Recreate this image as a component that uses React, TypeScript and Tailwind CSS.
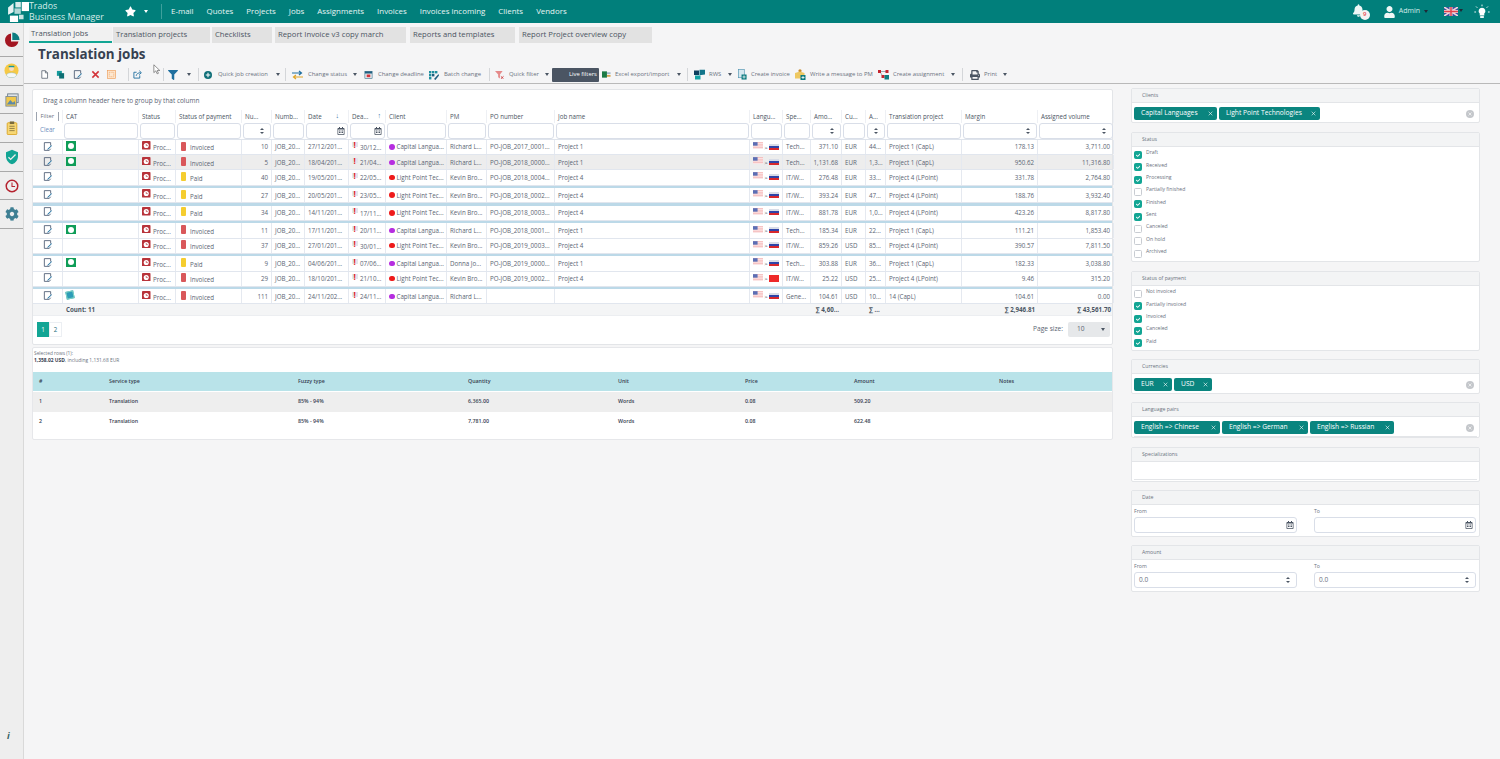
import React from "react";
import { FaBell, FaCheck, FaCog, FaFilter, FaPrint, FaRegCalendarAlt, FaStar, FaUser } from "react-icons/fa";
import { MdVerifiedUser } from "react-icons/md";

const cols =
  "grid grid-cols-[30px_76px_37px_66px_30px_33px_44px_37px_61px_40px_68px_195px_33px_28px_31px_24px_20px_76px_76px_76px]";

function Caret({ className = "", color = "border-t-[#4b5563]" }: { className?: string; color?: string }) {
  return <div className={"w-0 h-0 shrink-0 border-x-[2.5px] border-t-[3px] border-x-transparent " + color + " " + className} />;
}

function Sep({ className }: { className: string }) {
  return <div className={"w-px h-[13px] shrink-0 bg-[#d4d6d9] " + className} />;
}

function Label({ className, children }: { className: string; children: React.ReactNode }) {
  return <span className={"shrink-0 whitespace-nowrap text-[5.9px] text-[#6b7280] " + className}>{children}</span>;
}

function Logo() {
  return (
    <svg viewBox="0 0 24 22" className="w-[22px] h-[20px] ml-[8px] shrink-0" fill="#fff">
      <rect x="8" y="0" width="6" height="6" opacity=".85" />
      <rect x="15" y="0" width="8" height="10" />
      <polygon points="0,6 6,1 6,11 0,14" opacity=".9" />
      <polygon points="7,7 14,7 14,13 7,13" opacity=".7" />
      <polygon points="2,15 11,15 11,22 2,22" />
      <rect x="12" y="14" width="5" height="5" opacity=".8" />
    </svg>
  );
}

function Sidebar() {
  const box = "h-[28.7px] flex items-center justify-center border-b border-[#a9a9a9]";
  return (
    <aside className="w-[24px] shrink-0 bg-[#eeeeee] border-r border-[#d9d9d9] flex flex-col">
      <div className="h-[34px] flex items-center justify-center border-b border-[#a9a9a9]">
        <svg viewBox="0 0 16 16" className="w-[16px] h-[16px]">
          <path d="M7 1.5 A6.8 6.8 0 1 0 14.5 9.5 L7 9.5 Z" fill="#a31621" />
          <path d="M8.3 0.6 A7.4 7.4 0 0 1 15.6 8 L8.3 8 Z" fill="#0d7c80" />
        </svg>
      </div>
      <div className={box}>
        <svg viewBox="0 0 16 16" className="w-[15px] h-[15px]">
          <circle cx="8" cy="8" r="7.5" fill="#f6c945" />
          <circle cx="8" cy="6" r="2.6" fill="#f8dcc0" />
          <path d="M5 4.5 H11 V3 H5 Z" fill="#159a9c" />
          <path d="M2.5 13 C3 9.5 13 9.5 13.5 13 L11 15.5 H5 Z" fill="#f4f7f7" stroke="#8fbcc0" strokeWidth=".5" />
        </svg>
      </div>
      <div className={box}>
        <svg viewBox="0 0 16 16" className="w-[14px] h-[14px]">
          <rect x="3" y="1" width="12" height="10" fill="#dfe4e8" stroke="#6b7c88" />
          <rect x="1" y="4" width="12" height="11" fill="#f1c84b" stroke="#7c8b95" />
          <path d="M2 13 L6 8 L9 11 L11 9 L12 13 Z" fill="#5d8aa8" />
        </svg>
      </div>
      <div className={box}>
        <svg viewBox="0 0 16 16" className="w-[14px] h-[14px]">
          <rect x="2.5" y="2" width="11" height="13.5" rx="1" fill="#f7d774" stroke="#d9a21f" />
          <rect x="5.5" y="0.5" width="5" height="3" fill="#7a6a3a" />
          <path d="M5 6H11M5 8.5H11M5 11H11" stroke="#7a6a3a" strokeWidth=".9" />
        </svg>
      </div>
      <div className={box}>
        <MdVerifiedUser className="w-[16px] h-[16px] text-[#12a594]" />
      </div>
      <div className={box}>
        <svg viewBox="0 0 16 16" className="w-[14px] h-[14px]" fill="none" stroke="#b5232f">
          <circle cx="8" cy="8" r="6.6" strokeWidth="1.7" />
          <path d="M8 4V8.5H11.5" strokeWidth="1.2" />
        </svg>
      </div>
      <div className={box}>
        <FaCog className="w-[14px] h-[14px] text-[#3e7f93]" />
      </div>
      <div className="flex-1" />
      <div className="h-[30px] pl-[7px] text-[9px] text-[#33605f] font-bold italic">i</div>
    </aside>
  );
}

function DocIcon({ className = "" }: { className?: string }) {
  return (
    <svg viewBox="0 0 10 10" className={"w-[9px] h-[9px] shrink-0 " + className} fill="none" stroke="#4b5563" strokeWidth=".8">
      <path d="M2 .8H6L8.4 3.2V9.2H2Z" fill="#fff" />
      <path d="M6 .8V3.2H8.4" />
    </svg>
  );
}

function EditDoc({ className = "" }: { className?: string }) {
  return (
    <svg viewBox="0 0 10 10" className={"w-[9px] h-[9px] shrink-0 " + className} fill="none">
      <path d="M1.5 .7H8.5V4M8.5 7.5L7 9.3H1.5V.7" stroke="#42526a" strokeWidth=".9" />
      <path d="M9.4 3.6L5.2 7.6L4.6 8.6L5.8 8.2L10 4.2Z" fill="#1f6f9f" />
    </svg>
  );
}

function Toolbar() {
  return (
    <div className="h-[18px] shrink-0 flex items-center pl-[16px] border-b border-[#b9b9b9] relative">
      <DocIcon />
      <svg viewBox="0 0 10 10" className="w-[9px] h-[9px] shrink-0 ml-[7px]">
        <rect x="1" y="1" width="5.5" height="5.5" fill="#159a9c" />
        <rect x="3.5" y="3.5" width="5.5" height="6" fill="#0d6f73" />
      </svg>
      <EditDoc className="ml-[8px]" />
      <svg viewBox="0 0 10 10" className="w-[9px] h-[9px] shrink-0 ml-[9px]" stroke="#d3333a" strokeWidth="1.7">
        <path d="M1.5 1.5L8.5 8.5M8.5 1.5L1.5 8.5" />
      </svg>
      <svg viewBox="0 0 10 10" className="w-[9px] h-[9px] shrink-0 ml-[7px]" fill="#fde7d0" stroke="#ee9a55" strokeWidth=".7">
        <rect x=".5" y=".5" width="9" height="9" />
        <rect x="2.5" y="2.5" width="5" height="5" strokeDasharray="1 .7" />
      </svg>
      <Sep className="ml-[12px]" />
      <svg viewBox="0 0 10 10" className="w-[9px] h-[9px] shrink-0 ml-[4px]" fill="none" stroke="#1f6f9f" strokeWidth="1">
        <path d="M7.5 6V9H1V2.5H4" />
        <path d="M3.5 6.5C4 4 6 3 8.5 3M7 .8L9.3 3L7 5.2" />
      </svg>
      <Sep className="ml-[21px]" />
      <FaFilter className="w-[10px] h-[10px] shrink-0 ml-[4px] text-[#1f6f9f]" />
      <Caret className="ml-[9px]" />
      <Sep className="ml-[7px]" />
      <svg viewBox="0 0 10 10" className="w-[8px] h-[8px] shrink-0 ml-[5px]">
        <circle cx="5" cy="5" r="5" fill="#0f6f78" />
        <path d="M5 2.2V7.8M2.2 5H7.8" stroke="#fff" strokeWidth="1.3" />
      </svg>
      <Label className="w-[51px] ml-[6px]">Quick job creation</Label>
      <Caret className="ml-[7px]" />
      <Sep className="ml-[5px]" />
      <svg viewBox="0 0 11 10" className="w-[11px] h-[10px] shrink-0 ml-[6px]" fill="none" strokeWidth="1.2">
        <path d="M0 3H9M7 1L9.5 3L7 5" stroke="#1f6f9f" />
        <path d="M11 7H2M4 5L1.5 7L4 9" stroke="#e0a526" />
      </svg>
      <Label className="w-[39px] ml-[5px]">Change status</Label>
      <Caret className="ml-[6px]" />
      <svg viewBox="0 0 10 10" className="w-[9px] h-[9px] shrink-0 ml-[7px]">
        <rect x="1" y="1.5" width="8" height="8" fill="#e7ecef" stroke="#1f5f7f" strokeWidth=".6" />
        <rect x="1" y="1.5" width="8" height="2.4" fill="#1f5f7f" />
        <rect x="3" y="5" width="4" height="3" fill="#d3333a" />
      </svg>
      <Label className="w-[47px] ml-[5px]">Change deadline</Label>
      <svg viewBox="0 0 10 10" className="w-[10px] h-[10px] shrink-0 ml-[4px]" fill="#1f8f9f">
        <rect x="0" y="1" width="2.4" height="2.4" />
        <rect x="3" y="1" width="2.4" height="2.4" />
        <rect x="6" y="1" width="2.4" height="2.4" />
        <rect x="0" y="4" width="2.4" height="2.4" />
        <rect x="3" y="4" width="2.4" height="2.4" fill="#1f5f7f" />
        <rect x="0" y="7" width="2.4" height="2.4" />
        <path d="M9.5 4L5 9L6.5 10L10 5.5Z" fill="#1f5f7f" />
      </svg>
      <Label className="w-[38px] ml-[5px]">Batch change</Label>
      <Sep className="ml-[7px]" />
      <svg viewBox="0 0 10 10" className="w-[9px] h-[9px] shrink-0 ml-[5px]">
        <path d="M0 1H8.5L5.5 5V9.5L3.5 8V5Z" fill="#e58a8a" />
        <path d="M6.5 7L9.5 9.8M9.5 7L6.5 9.8" stroke="#cf3c3c" />
      </svg>
      <Label className="w-[31px] ml-[5px]">Quick filter</Label>
      <Caret className="ml-[5px]" />
      <div className="w-[47px] h-[14px] shrink-0 ml-[3px] bg-[#4b5563] rounded-[1px] flex items-center pl-[17px] text-[5.9px] text-white whitespace-nowrap">
        Live filters
      </div>
      <svg viewBox="0 0 10 10" className="w-[9px] h-[9px] shrink-0 ml-[3px]">
        <rect x="0" y="1.5" width="5.5" height="7" fill="#1c7a45" />
        <rect x="5.5" y="2.5" width="4" height="2" fill="#9fb7c9" />
        <rect x="5.5" y="5.5" width="4" height="2" fill="#d5a34c" />
      </svg>
      <Label className="w-[55px] ml-[4px]">Excel export/import</Label>
      <Caret className="ml-[7px]" />
      <Sep className="ml-[6px]" />
      <svg viewBox="0 0 11 11" className="w-[11px] h-[11px] shrink-0 ml-[6px]">
        <path d="M0 1.5H5V6H0Z" fill="#0f3f5f" />
        <path d="M5.5 .8H11V5.5L5.5 6.2Z" fill="#12758a" />
        <path d="M1 6.5H6.5V10.5H1Z" fill="#14a3a6" />
      </svg>
      <Label className="w-[13px] ml-[4px]">RWS</Label>
      <Caret className="ml-[6px]" />
      <svg viewBox="0 0 10 12" className="w-[10px] h-[11px] shrink-0 ml-[5px]">
        <rect x="1" y="0.5" width="6.5" height="9" fill="#d6e8f0" stroke="#4f93b0" strokeWidth=".7" />
        <rect x="4.5" y="6" width="5.5" height="5.5" fill="#0f7c80" />
        <path d="M7.2 7V10.5M5.5 8.7H9" stroke="#fff" strokeWidth=".8" />
      </svg>
      <Label className="w-[40px] ml-[4px]">Create invoice</Label>
      <svg viewBox="0 0 11 11" className="w-[11px] h-[11px] shrink-0 ml-[4px]">
        <circle cx="5" cy="1.8" r="1.6" fill="#c98a2b" />
        <path d="M0 4L5 2.5L9.5 4V9.5H0Z" fill="#eec861" />
        <rect x="5.5" y="6" width="5" height="5" fill="#0f7c80" />
        <path d="M8 7V10M6.5 8.5H9.5" stroke="#fff" strokeWidth=".8" />
      </svg>
      <Label className="w-[65px] ml-[4px]">Write a message to PM</Label>
      <svg viewBox="0 0 11 11" className="w-[11px] h-[11px] shrink-0 ml-[3px]">
        <path d="M2 2.5H8.5M2 2.5L5 8" stroke="#7a8a95" strokeWidth=".7" />
        <rect x="0" y="1" width="3" height="3" fill="#c4242e" />
        <rect x="7.5" y="1" width="3" height="3" fill="#c4242e" />
        <rect x="3.5" y="6" width="3" height="3" fill="#c4242e" />
        <rect x="6.5" y="6" width="4.5" height="4.5" fill="#0f7c80" />
      </svg>
      <Label className="w-[52px] ml-[4px]">Create assignment</Label>
      <Caret className="ml-[6px]" />
      <Sep className="ml-[7px]" />
      <FaPrint className="w-[10px] h-[10px] shrink-0 ml-[7px] text-[#4b5563]" />
      <Label className="w-[13px] ml-[4px]">Print</Label>
      <Caret className="ml-[6px]" />
      <svg viewBox="0 0 10 14" className="absolute left-[129px] top-[-2px] w-[8px] h-[11px]" fill="#fff" stroke="#555" strokeWidth=".8">
        <path d="M1 1V11L3.5 8.7L5.2 12.5L6.8 11.8L5.2 8.2H8.5Z" />
      </svg>
    </div>
  );
}

function Spinner() {
  return (
    <div className="flex flex-col gap-[1.5px] items-center absolute right-[6px] top-[4px]">
      <div className="w-0 h-0 border-x-[2.2px] border-b-[2.6px] border-x-transparent border-b-[#4b5563]" />
      <div className="w-0 h-0 border-x-[2.2px] border-t-[2.6px] border-x-transparent border-t-[#4b5563]" />
    </div>
  );
}

function FilterBox({ kind }: { kind?: "spin" | "date" }) {
  return (
    <div className="h-[16px] mx-[1px] relative bg-white border border-[#d9dee8] rounded-[3px]">
      {kind === "spin" && <Spinner />}
      {kind === "date" && <FaRegCalendarAlt className="absolute right-[2px] top-[3px] w-[8px] h-[8px] text-[#4b5563]" />}
    </div>
  );
}

function UsFlag() {
  return (
    <svg viewBox="0 0 12 8" className="w-[10px] h-[7px] shrink-0 -mt-[3px]">
      <rect width="12" height="8" fill="#f5b5b5" />
      <path d="M0 1.5H12M0 3.5H12M0 5.5H12M0 7.5H12" stroke="#fff" strokeWidth=".8" />
      <rect width="5.5" height="4.2" fill="#5b6fb5" />
    </svg>
  );
}

function ToFlag({ cn }: { cn?: boolean }) {
  if (cn) return <div className="w-[10px] h-[7px] shrink-0 -mt-[1px] bg-[#ee2a2a]" />;
  return (
    <div className="w-[10px] h-[6px] shrink-0 flex flex-col -mt-[1px]">
      <div className="flex-1 bg-[#d9dde8]" />
      <div className="flex-1 bg-[#2f45a8]" />
      <div className="flex-1 bg-[#d8282c]" />
    </div>
  );
}

type Row = {
  cat?: "green" | "blue";
  pay: "Invoiced" | "Paid";
  num: string;
  date: string;
  dead: string;
  lp?: boolean;
  pm: string;
  po: string;
  job: string;
  cn?: boolean;
  spec: string;
  amt: string;
  cur: string;
  a: string;
  proj: string;
  margin: string;
  vol: string;
  sel?: boolean;
  sep?: boolean;
};

const rows: Row[] = [
  { cat: "green", pay: "Invoiced", num: "10", date: "27/12/201...", dead: "30/12...", pm: "Richard L...", po: "PO-JOB_2017_0001...", job: "Project 1", spec: "Tech...", amt: "371.10", cur: "EUR", a: "44...", proj: "Project 1 (CapL)", margin: "178.13", vol: "3,711.00" },
  { cat: "green", pay: "Invoiced", num: "5", date: "18/04/201...", dead: "21/04...", pm: "Richard L...", po: "PO-JOB_2018_0000...", job: "Project 1", spec: "Tech...", amt: "1,131.68", cur: "EUR", a: "1,3...", proj: "Project 1 (CapL)", margin: "950.62", vol: "11,316.80", sel: true },
  { pay: "Paid", num: "40", date: "19/05/201...", dead: "22/05...", lp: true, pm: "Kevin Bro...", po: "PO-JOB_2018_0004...", job: "Project 4", spec: "IT/W...", amt: "276.48", cur: "EUR", a: "33...", proj: "Project 4 (LPoint)", margin: "331.78", vol: "2,764.80", sep: true },
  { pay: "Paid", num: "27", date: "20/05/201...", dead: "23/05...", lp: true, pm: "Kevin Bro...", po: "PO-JOB_2018_0002...", job: "Project 4", spec: "IT/W...", amt: "393.24", cur: "EUR", a: "47...", proj: "Project 4 (LPoint)", margin: "188.76", vol: "3,932.40", sep: true },
  { pay: "Paid", num: "34", date: "14/11/201...", dead: "17/11...", lp: true, pm: "Kevin Bro...", po: "PO-JOB_2018_0003...", job: "Project 4", spec: "IT/W...", amt: "881.78", cur: "EUR", a: "1,0...", proj: "Project 4 (LPoint)", margin: "423.26", vol: "8,817.80", sep: true },
  { cat: "green", pay: "Invoiced", num: "11", date: "17/11/201...", dead: "20/11...", pm: "Richard L...", po: "PO-JOB_2018_0001...", job: "Project 1", spec: "Tech...", amt: "185.34", cur: "EUR", a: "22...", proj: "Project 1 (CapL)", margin: "111.21", vol: "1,853.40" },
  { pay: "Invoiced", num: "37", date: "27/01/201...", dead: "30/01...", lp: true, pm: "Kevin Bro...", po: "PO-JOB_2019_0003...", job: "Project 4", spec: "IT/W...", amt: "859.26", cur: "USD", a: "85...", proj: "Project 4 (LPoint)", margin: "390.57", vol: "7,811.50", sep: true },
  { cat: "green", pay: "Paid", num: "9", date: "04/06/201...", dead: "07/06...", pm: "Donna Jo...", po: "PO-JOB_2019_0000...", job: "Project 1", spec: "Tech...", amt: "303.88", cur: "EUR", a: "36...", proj: "Project 1 (CapL)", margin: "182.33", vol: "3,038.80" },
  { pay: "Invoiced", num: "29", date: "18/10/201...", dead: "21/10...", lp: true, pm: "Kevin Bro...", po: "PO-JOB_2019_0002...", job: "Project 4", cn: true, spec: "IT/W...", amt: "25.22", cur: "USD", a: "25...", proj: "Project 4 (LPoint)", margin: "9.46", vol: "315.20", sep: true },
  { cat: "blue", pay: "Invoiced", num: "111", date: "24/11/202...", dead: "24/11...", pm: "Richard L...", po: "", job: "", spec: "Gene...", amt: "104.61", cur: "USD", a: "10...", proj: "14 (CapL)", margin: "104.61", vol: "0.00" },
];

function Cell({ right, className = "", children }: { right?: boolean; className?: string; children?: React.ReactNode }) {
  return (
    <div className={"flex items-center h-full min-w-0 px-[3px] border-r border-[#e5e9f0] whitespace-nowrap overflow-hidden " + (right ? "justify-end " : "") + className}>
      {children}
    </div>
  );
}

function GridRow({ r }: { r: Row }) {
  return (
    <>
      <div className={cols + " h-[15.2px] border-b border-[#e1e6ee] text-[#5a6472] " + (r.sel ? "bg-[#ededed]" : "bg-white")}>
        <Cell className="justify-center">
          <EditDoc className="-mt-[2px]" />
        </Cell>
        <Cell>
          {r.cat === "green" && (
            <div className="w-[10px] h-[9.5px] -mt-[2px] bg-[#0f9d58] flex items-center justify-center">
              <div className="w-[6px] h-[6px] bg-white rounded-full" />
            </div>
          )}
          {r.cat === "blue" && <div className="w-[8px] h-[8px] -mt-[2px] bg-[#2d9cb8] border border-[#7fd3c3] -rotate-12" />}
        </Cell>
        <Cell>
          <svg viewBox="0 0 10 10" className="w-[8.5px] h-[8.5px] shrink-0 -mt-[3px]" fill="none">
            <rect width="10" height="10" rx="1" fill="#b8333a" />
            <circle cx="5" cy="5.3" r="3" fill="#fff" />
            <path d="M5 3.6V5.4H6.8" stroke="#b8333a" strokeWidth=".8" />
          </svg>
          <span className="ml-[2.5px] mt-[2px]">Proc...</span>
        </Cell>
        <Cell>
          <div className={"w-[5px] h-[9px] shrink-0 rounded-[1px] -mt-[2px] ml-[2px] " + (r.pay === "Paid" ? "bg-[#f5cd2f]" : "bg-[#d9575a]")} />
          <span className="ml-[4px] mt-[2px]">{r.pay}</span>
        </Cell>
        <Cell right>{r.num}</Cell>
        <Cell>JOB_20...</Cell>
        <Cell>{r.date}</Cell>
        <Cell>
          <span className="relative w-[6px] -mt-[3px] leading-none">
            <span className="absolute left-0 top-[1px] w-[6px] h-[5px] bg-[#e3e6ec]" />
            <span className="relative pl-[1.5px] text-[#e21b23] font-bold text-[8px]">!</span>
          </span>
          <span className="ml-[2px] mt-[1px]">{r.dead}</span>
        </Cell>
        <Cell>
          <div className={"w-[5.5px] h-[5.5px] shrink-0 rounded-full " + (r.lp ? "bg-[#ee1a1a]" : "bg-[#b62ee0]")} />
          <span className="ml-[2px]">{r.lp ? "Light Point Tec..." : "Capital Langua..."}</span>
        </Cell>
        <Cell>{r.pm}</Cell>
        <Cell>{r.po}</Cell>
        <Cell>{r.job}</Cell>
        <Cell>
          <UsFlag />
          <span className="text-[6px] w-[7px] text-center mt-[2px] text-[#374151]">&gt;</span>
          <ToFlag cn={r.cn} />
        </Cell>
        <Cell>{r.spec}</Cell>
        <Cell right>{r.amt}</Cell>
        <Cell>{r.cur}</Cell>
        <Cell>{r.a}</Cell>
        <Cell>{r.proj}</Cell>
        <Cell right>{r.margin}</Cell>
        <Cell right>{r.vol}</Cell>
      </div>
      {r.sep && <div className="h-[2.5px] bg-[#bcd9e8]" />}
    </>
  );
}

function JobsGrid() {
  const heads = ["", "CAT", "Status", "Status of payment", "Nu...", "Numb...", "Date", "Dea...", "Client", "PM", "PO number", "Job name", "Langu...", "Spe...", "Amo...", "Cu...", "A...", "Translation project", "Margin", "Assigned volume"];
  const kinds: Record<number, "spin" | "date"> = { 4: "spin", 6: "date", 7: "date", 14: "spin", 16: "spin", 18: "spin", 19: "spin" };
  return (
    <div className="h-[256px] bg-white border border-[#e3e5e8] rounded-[2px] flex flex-col text-[6.2px]">
      <div className="h-[20px] pl-[10px] pt-[1px] flex items-center text-[6.45px] text-[#5a6472]">Drag a column header here to group by that column</div>
      <div className={cols + " h-[13px] text-[#4b5563]"}>
        {heads.map((h, i) => (
          <div key={i} className="flex items-center px-[3px] whitespace-nowrap overflow-hidden border-r border-[#eef0f4]">
            {i === 0 ? (
              <span className="px-[3.5px] border-x border-[#9ca3af] text-[5.8px] text-[#6b7280]">Filter</span>
            ) : (
              h
            )}
            {i === 6 && <span className="ml-auto mr-[6px] text-[#2f6f9f] text-[7px]">↓</span>}
            {i === 7 && <span className="ml-auto mr-[1px] text-[#2f6f9f] text-[7px]">↑</span>}
          </div>
        ))}
      </div>
      <div className={cols + " h-[17px] border-b border-[#dfe4ec]"}>
        {heads.map((_, i) =>
          i === 0 ? (
            <div key={i} className="pl-[7px] pt-[2px] text-[#6f8fc0]">Clear</div>
          ) : (
            <FilterBox key={i} kind={kinds[i]} />
          )
        )}
      </div>
      {rows.map((r, i) => (
        <GridRow key={i} r={r} />
      ))}
      <div className={cols + " h-[12px] bg-[#f4f5f6] border-b border-[#eceef1] font-bold text-[#4b5563] items-center"}>
        <div />
        <div className="col-span-13 px-[3px]">Count: 11</div>
        <div className="text-right px-[3px] whitespace-nowrap">∑ 4,60...</div>
        <div />
        <div className="px-[3px] whitespace-nowrap">∑ ...</div>
        <div />
        <div className="text-right px-[3px] whitespace-nowrap">∑ 2,946.81</div>
        <div className="text-right px-[3px] whitespace-nowrap">∑ 43,561.70</div>
      </div>
      <div className="mt-[5px] h-[16px] flex items-center pl-[4px] pr-[2px]">
        <div className="w-[12px] h-[15px] bg-[#12a594] text-white flex items-center justify-center">1</div>
        <div className="w-[13px] h-[15px] border border-[#eceff3] text-[#24707a] flex items-center justify-center">2</div>
        <span className="ml-auto text-[#5a6472] text-[6.6px]">Page size:</span>
        <div className="ml-[5px] w-[42px] h-[15px] bg-[#e6e8ea] rounded-[2px] flex items-center pl-[9px] pr-[5px] text-[#5a6472] text-[6.6px]">
          10
          <Caret className="ml-auto" />
        </div>
      </div>
    </div>
  );
}

const svcCols = "grid grid-cols-[70px_189px_170px_150px_127px_109px_145px_1fr] items-center pl-[6px]";

function ServicePanel() {
  const lines = [
    ["1", "Translation", "85% - 94%", "6,365.00", "Words", "0.08", "509.20", ""],
    ["2", "Translation", "85% - 94%", "7,781.00", "Words", "0.08", "622.48", ""],
  ];
  return (
    <div className="mt-[2px] h-[93px] bg-white border border-[#e6e7ea] rounded-[2px] text-[5.3px] text-[#374151]">
      <div className="h-[24px] pl-[1px] pt-[2px] leading-[6.5px] text-[#6b7280]">
        <div className="text-[4.8px]">Selected rows (1):</div>
        <div className="text-[4.9px]">
          <span className="font-bold text-[#374151]">1,358.02 USD</span>, including 1,131.68 EUR
        </div>
      </div>
      <div className={svcCols + " h-[19px] bg-[#b9e3e9] font-semibold"}>
        {["#", "Service type", "Fuzzy type", "Quantity", "Unit", "Price", "Amount", "Notes"].map((h) => (
          <div key={h}>{h}</div>
        ))}
      </div>
      {lines.map((l, i) => (
        <div key={i} className={svcCols + " h-[20px] font-semibold " + (i === 0 ? "bg-[#eeeeee] mt-[1px]" : "bg-white")}>
          {l.map((c, j) => (
            <div key={j}>{c}</div>
          ))}
        </div>
      ))}
    </div>
  );
}

function FilterPanel({ title, className, children }: { title: string; className: string; children?: React.ReactNode }) {
  return (
    <div className={"bg-white border border-[#e3e5e8] rounded-[2px] flex flex-col " + className}>
      <div className="h-[14px] shrink-0 bg-[#f3f4f5] border-b border-[#e3e5e8] flex items-center pl-[10px] text-[5.2px] text-[#6b7280]">{title}</div>
      {children}
    </div>
  );
}

function Chips({ items }: { items: [string, string][] }) {
  return (
    <div className="mx-[2px] mt-[4px] pb-[2px] border-b border-[#e3e5e8] flex items-center gap-[2px] relative">
      {items.map(([t, w]) => (
        <div key={t} className={"h-[12.5px] bg-[#0a857f] rounded-[2px] pl-[7px] pr-[4px] flex items-center justify-between text-white text-[6.7px] whitespace-nowrap " + w}>
          {t}
          <svg viewBox="0 0 6 6" className="w-[5px] h-[5px] shrink-0 mt-[1px]" stroke="#fff" strokeWidth=".7">
            <path d="M.8.8L5.2 5.2M5.2.8L.8 5.2" />
          </svg>
        </div>
      ))}
      <div className="absolute right-[3px] top-[3px] w-[8px] h-[8px] rounded-full bg-[#c4c7cb] flex items-center justify-center">
        <svg viewBox="0 0 6 6" className="w-[4px] h-[4px]" stroke="#fff" strokeWidth="1">
          <path d="M.8.8L5.2 5.2M5.2.8L.8 5.2" />
        </svg>
      </div>
    </div>
  );
}

function CheckRow({ label, on }: { label: string; on: boolean }) {
  return (
    <div className="h-[12.33px] flex items-center pl-[2px]">
      <div className={"w-[8px] h-[8px] mt-[2px] shrink-0 rounded-[1.5px] flex items-center justify-center border " + (on ? "bg-[#12a594] border-[#12a594]" : "bg-white border-[#c8ccd2]")}>
        {on && <FaCheck className="w-[4.5px] h-[4.5px] text-white" />}
      </div>
      <span className="ml-[4px] -mt-[2px] text-[5.1px] text-[#6b7280]">{label}</span>
    </div>
  );
}

function FieldCols({ date }: { date?: boolean }) {
  return (
    <div className="grid grid-cols-[163px_162px] gap-x-[17px] pl-[2px] pt-[3px] text-[5.2px] text-[#6b7280]">
      {["From", "To"].map((t) => (
        <div key={t}>
          <div className="h-[9px]">{t}</div>
          <div className="h-[16px] relative bg-white border border-[#d9dee8] rounded-[3px] flex items-center pl-[4px] text-[6.5px]">
            {!date && "0.0"}
            {date ? <FaRegCalendarAlt className="absolute right-[2px] top-[3px] w-[8px] h-[8px] text-[#4b5563]" /> : <Spinner />}
          </div>
        </div>
      ))}
    </div>
  );
}

function RightColumn() {
  return (
    <div className="w-[349px] shrink-0 flex flex-col">
      <FilterPanel title="Clients" className="h-[35px] mb-[9px]">
        <Chips items={[["Capital Languages", "w-[83px]"], ["Light Point Technologies", "w-[101px]"]]} />
      </FilterPanel>
      <FilterPanel title="Status" className="h-[130px] mb-[9px]">
        <div className="pt-[1px]">
          <CheckRow label="Draft" on />
          <CheckRow label="Received" on />
          <CheckRow label="Processing" on />
          <CheckRow label="Partially finished" on={false} />
          <CheckRow label="Finished" on />
          <CheckRow label="Sent" on />
          <CheckRow label="Canceled" on={false} />
          <CheckRow label="On hold" on={false} />
          <CheckRow label="Archived" on={false} />
        </div>
      </FilterPanel>
      <FilterPanel title="Status of payment" className="h-[80px] mb-[8px]">
        <div className="pt-[1px]">
          <CheckRow label="Not invoiced" on={false} />
          <CheckRow label="Partially invoiced" on />
          <CheckRow label="Invoiced" on />
          <CheckRow label="Canceled" on />
          <CheckRow label="Paid" on />
        </div>
      </FilterPanel>
      <FilterPanel title="Currencies" className="h-[35px] mb-[8px]">
        <Chips items={[["EUR", "w-[38px]"], ["USD", "w-[38px]"]]} />
      </FilterPanel>
      <FilterPanel title="Language pairs" className="h-[36px] mb-[9px]">
        <Chips items={[["English => Chinese", "w-[86px]"], ["English => German", "w-[86px]"], ["English => Russian", "w-[84px]"]]} />
      </FilterPanel>
      <FilterPanel title="Specializations" className="h-[35px] mb-[8px]">
        <div className="mx-[2px] h-[18px] border-b border-[#e3e5e8]" />
      </FilterPanel>
      <FilterPanel title="Date" className="h-[47px] mb-[8px]">
        <FieldCols date />
      </FilterPanel>
      <FilterPanel title="Amount" className="h-[47px]">
        <FieldCols />
      </FilterPanel>
    </div>
  );
}

export default function App() {
  const tabs: [string, string][] = [
    ["Translation projects", "w-[97px] ml-[1px]"],
    ["Checklists", "w-[60px] ml-[2px]"],
    ["Report Invoice v3 copy march", "w-[131px] ml-[3px]"],
    ["Reports and templates", "w-[105px] ml-[4px]"],
    ["Report Project overview copy", "w-[133px] ml-[4px]"],
  ];
  const nav = ["E-mail", "Quotes", "Projects", "Jobs", "Assignments", "Invoices", "Invoices incoming", "Clients", "Vendors"];
  return (
    <div className="w-[1500px] h-[759px] overflow-hidden flex flex-col bg-[#f5f5f6] font-['Open_Sans',sans-serif]">
      <header className="h-[23px] shrink-0 bg-[#017f7b] flex items-center text-white">
        <Logo />
        <div className="ml-[-1px] w-[78px] text-[8.8px] leading-[11px] text-[#d5ecea] whitespace-nowrap">
          <div>Trados</div>
          <div>Business Manager</div>
        </div>
        <FaStar className="ml-[18px] w-[11px] h-[11px]" />
        <Caret className="ml-[8px]" color="border-t-white" />
        <div className="ml-[13px] w-px h-[15px] bg-[#3ea09c]" />
        <div className="ml-[9px] flex gap-[13px] text-[7.9px] whitespace-nowrap text-[#e8f5f4]">
          {nav.map((n) => (
            <span key={n}>{n}</span>
          ))}
        </div>
        <div className="ml-auto relative">
          <FaBell className="w-[11px] h-[13px] mb-[3px] text-[#eef7f6]" />
          <div className="absolute left-[7px] top-[6px] w-[10px] h-[10px] rounded-full bg-[#f3f3f3] text-[#e8434a] text-[6px] flex items-center justify-center font-semibold">9</div>
        </div>
        <FaUser className="ml-[20px] w-[11px] h-[12px] text-[#eef7f6]" />
        <span className="ml-[4px] text-[7px] text-[#d5ecea]">Admin</span>
        <Caret className="ml-[4px]" color="border-t-[#1f2937]" />
        <svg viewBox="0 0 14 9" className="ml-[16px] w-[14px] h-[9px]">
          <rect width="14" height="9" fill="#3b4f9e" />
          <path d="M0 0L14 9M14 0L0 9" stroke="#f3d5d8" strokeWidth="1.6" />
          <path d="M7 0V9M0 4.5H14" stroke="#f3d5d8" strokeWidth="3" />
          <path d="M7 0V9M0 4.5H14" stroke="#e0424c" strokeWidth="1.5" />
        </svg>
        <Caret className="ml-[1px] mb-[3px]" color="border-t-[#1f2937]" />
        <svg viewBox="0 0 14 14" className="ml-[11px] mr-[10px] w-[16px] h-[16px]" fill="#fff">
          <path d="M7 3.2A3 3 0 0 1 9 8.4V10H5V8.4A3 3 0 0 1 7 3.2Z" />
          <rect x="5.4" y="10.6" width="3.2" height="1.6" />
          <path d="M7 .5V2M1.8 2.2L2.9 3.3M12.2 2.2L11.1 3.3M.3 7H1.8M12.2 7H13.7" stroke="#fff" strokeWidth=".8" />
        </svg>
      </header>
      <div className="flex flex-1 min-h-0">
        <Sidebar />
        <main className="flex-1 min-w-0 flex flex-col">
          <div className="h-[16px] mt-[4px] shrink-0 flex ml-[5px] text-[7.7px] text-[#4b5563] whitespace-nowrap">
            <div className="w-[83px] pl-[2px] flex items-center border-b-2 border-[#12a594] bg-[#f1f1f1]">Translation jobs</div>
            {tabs.map(([t, c]) => (
              <div key={t} className={"pl-[3px] flex items-center bg-[#e2e2e2] " + c}>
                {t}
              </div>
            ))}
          </div>
          <div className="h-[23px] shrink-0 flex items-center pl-[14px] text-[13.4px] font-bold text-[#374151]">Translation jobs</div>
          <Toolbar />
          <div className="flex pl-[8px] gap-[18px] pt-[4px]">
            <div className="w-[1081px] shrink-0 pt-[1px] flex flex-col">
              <JobsGrid />
              <ServicePanel />
            </div>
            <RightColumn />
          </div>
        </main>
      </div>
    </div>
  );
}
